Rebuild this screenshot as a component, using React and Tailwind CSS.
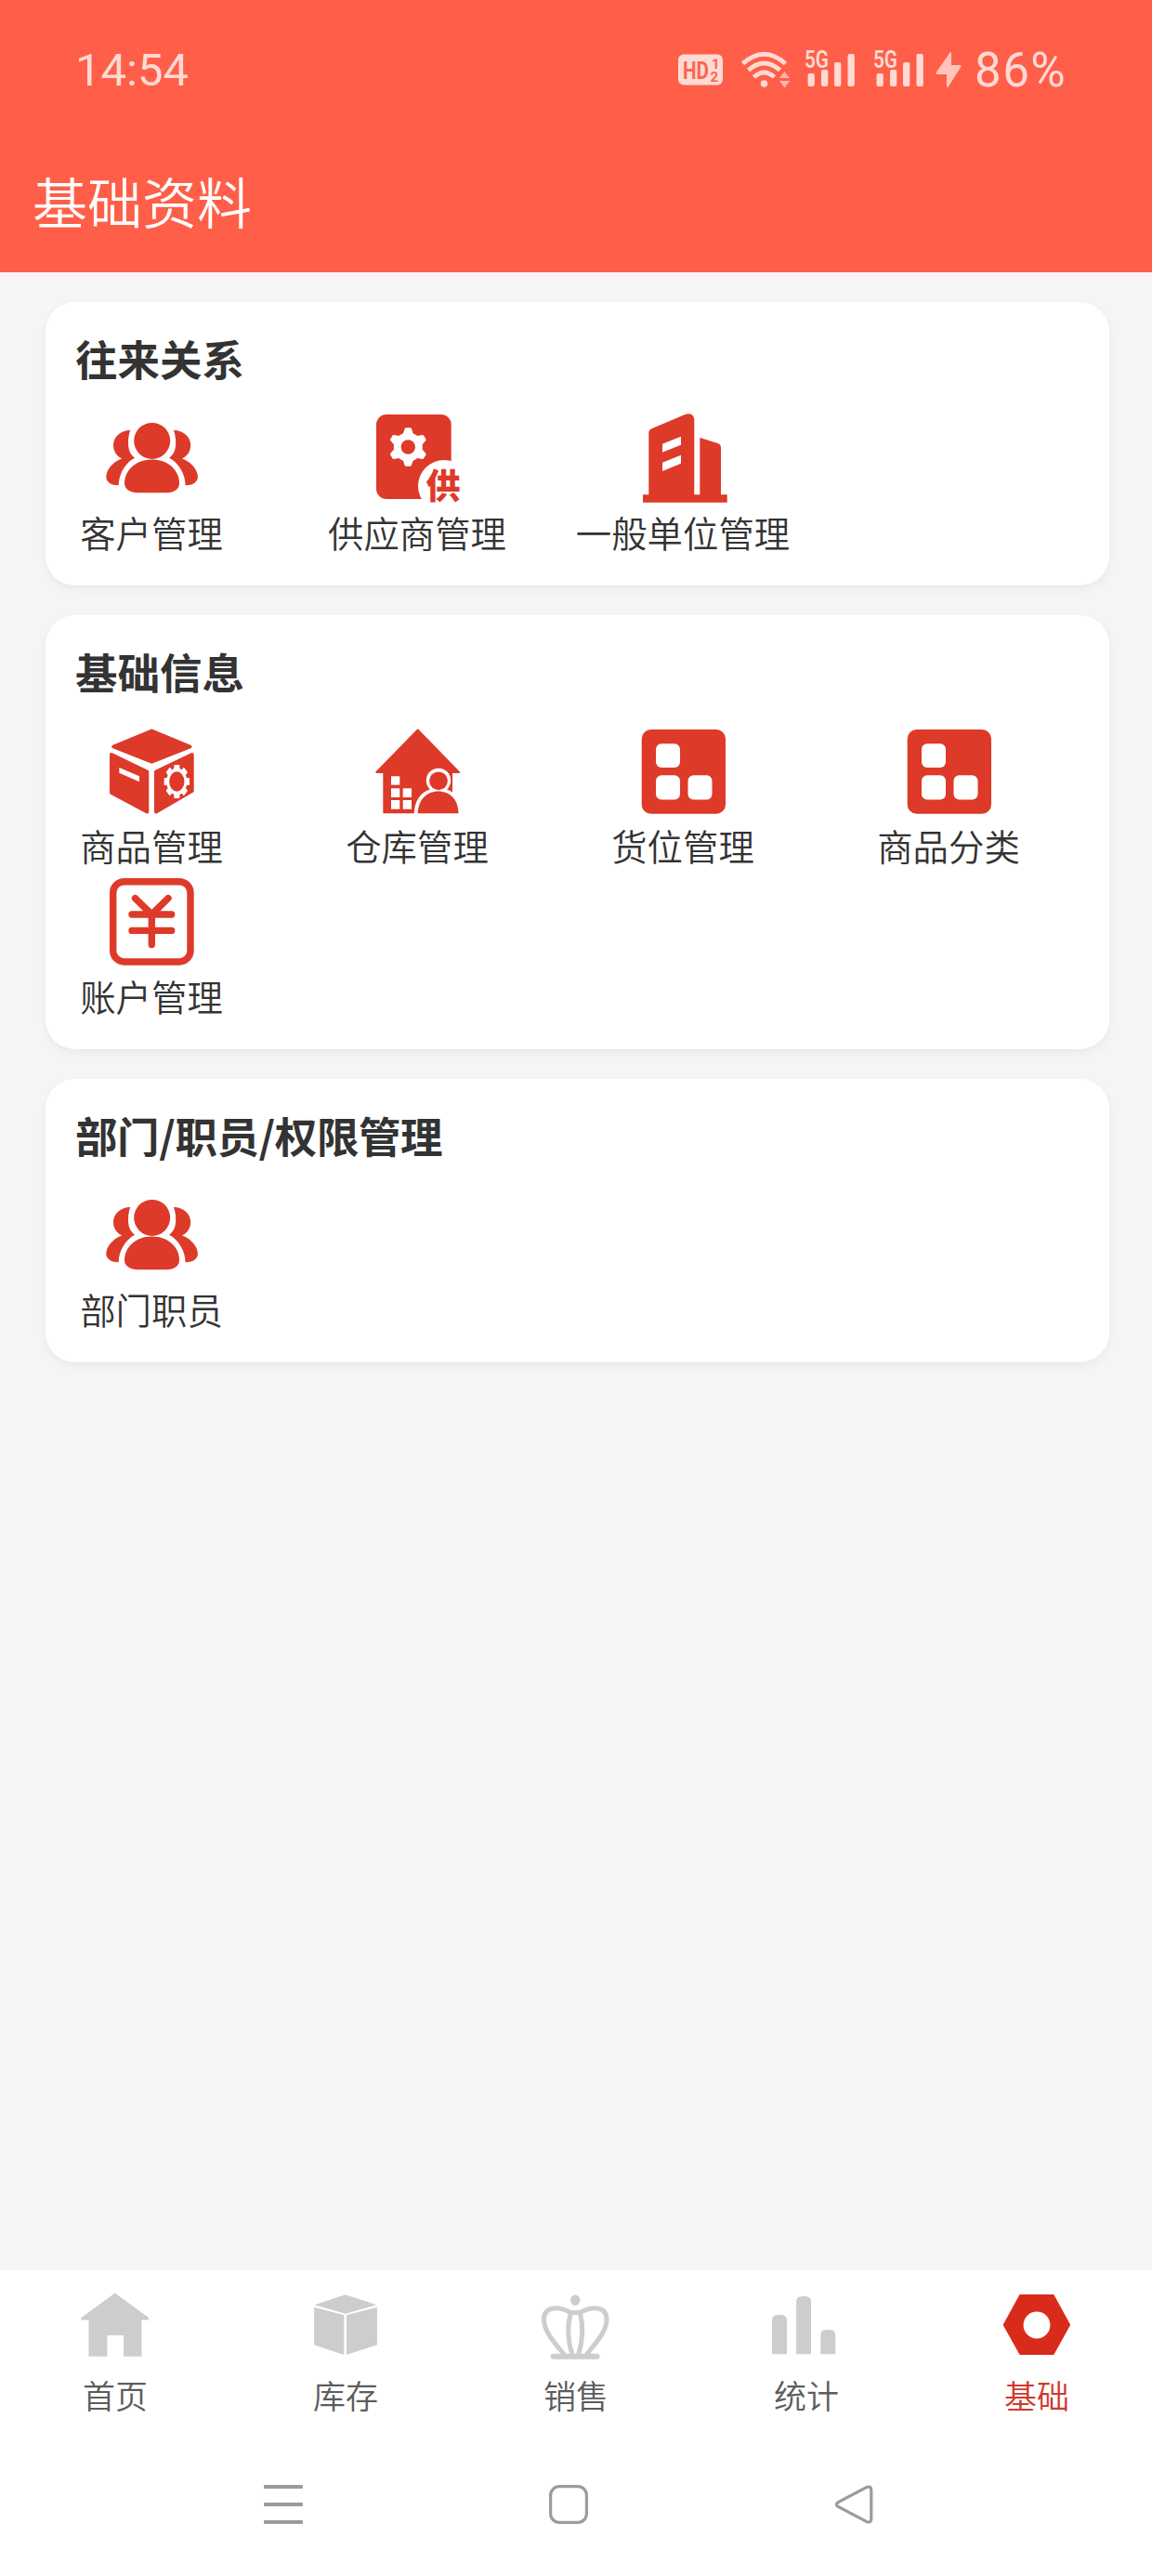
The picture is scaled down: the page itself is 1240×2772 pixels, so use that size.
import React from "react";

const RED = "#dd3a29";
const GRAY = "#cdcdcd";

function Tile({ children }) {
  return (
    <svg viewBox="0 0 96 96" className="block h-24 w-24 overflow-visible" fill={RED}>
      {children}
    </svg>
  );
}

const SIDE =
  "M25.3 18C15 18 7 25 7 34C7 41 11 46 16.3 48.5C6 52 -0.7 61 -0.7 68.3C-0.7 74 5 77.3 12.7 77.3C12.7 65 20 53 30 47.7C24.5 43.5 23 38 23 31C23 26 24 21 25.3 18Z";

function People() {
  return (
    <Tile>
      <circle cx="48.7" cy="29.4" r="19.5" />
      <path d="M48.7 49.5C30 49.5 19 62 19 75C19 81 25 85.3 33 85.3H64.5C72.5 85.3 78 81 78 75C78 62 67 49.5 48.7 49.5Z" />
      <path d={SIDE} />
      <path d={SIDE} transform="translate(97.2 0) scale(-1 1)" />
    </Tile>
  );
}

function Supplier() {
  return (
    <Tile>
      <rect x="4" y="1" width="80.7" height="91" rx="11" />
      <g fill="#fff" stroke="#fff">
        <circle cx="38.3" cy="36" r="15.5" stroke="none" />
        {[0, 60, 120].map((a) => (
          <path
            key={a}
            d="M36 16.5H40.6L44 26V46L40.6 55.5H36L32.6 46V26Z"
            strokeWidth="2.5"
            strokeLinejoin="round"
            transform={`rotate(${a} 38.3 36)`}
          />
        ))}
      </g>
      <circle cx="38.3" cy="36" r="7.7" />
      <circle cx="77" cy="78" r="28" fill="#fff" />
      <text
        x="76"
        y="91.5"
        textAnchor="middle"
        fontSize="37"
        className="font-['Noto_Sans_CJK_SC',sans-serif] font-black"
      >
        供
      </text>
    </Tile>
  );
}

function Building() {
  return (
    <Tile>
      <path
        fillRule="evenodd"
        d="M11.3 87.3V21Q11.3 17.5 14.5 16.2L51 0.8Q60.3 -1.5 60.3 8V87.3H66.3V26L85.5 31.9Q89 33 89 37V87.3H95.7V95.7H5V87.3ZM26 32.7V41.7L46 33.7V24.7ZM26 52.7V62L46 53.7V44.7Z"
      />
    </Tile>
  );
}

function Goods() {
  return (
    <Tile>
      <g stroke={RED} strokeWidth="4" strokeLinejoin="round">
        <path d="M48.3 4.5L89.5 21.5L48.3 37.7L7.2 21.5Z" />
        <path d="M5 30L43.3 48.5V91.5L5 71Z" />
        <path d="M53 48.5L91.7 30V69L53 91.5Z" />
      </g>
      <path d="M13.3 44L35 53.3V59.3L13.3 49.8Z" fill="#fff" />
      <g transform="translate(75.3 59) scale(0.76 1)">
        <circle r="14.5" fill="#fff" />
        {[0, 45, 90, 135].map((a) => (
          <rect key={a} x="-4" y="-18" width="8" height="36" rx="1" fill="#fff" transform={`rotate(${a})`} />
        ))}
        <circle r="10.7" />
      </g>
    </Tile>
  );
}

function Warehouse() {
  return (
    <Tile>
      <path
        d="M48.7 3.5L93 49H85V92.3H12.3V49H4.3Z"
        stroke={RED}
        strokeWidth="2"
        strokeLinejoin="round"
      />
      <g fill="#fff">
        <rect x="20" y="53.3" width="9.3" height="9.3" />
        <rect x="20" y="66.3" width="9.3" height="9.7" />
        <rect x="32.7" y="66.3" width="9.3" height="9.7" />
        <rect x="20" y="79" width="9.3" height="9.7" />
        <rect x="32.7" y="79" width="9.3" height="9.7" />
        <path d="M44.7 94C45 80 52 70 62 67.5A13.2 13.2 0 1 1 80 67.5Q84 68.5 87 71.5V94Z" />
      </g>
      <circle cx="71" cy="58.3" r="9.9" />
      <path d="M48.7 93.3C49 78 59 69.5 70.7 69.5C83 69.5 92.3 78 92.5 93.3Z" />
    </Tile>
  );
}

function Blocks() {
  return (
    <Tile>
      <rect x="3.7" y="3" width="90.3" height="90.7" rx="10" />
      <g fill="#fff">
        <rect x="19" y="18.3" width="26" height="25.7" rx="6" />
        <rect x="19" y="52.3" width="26" height="26.3" rx="6" />
        <rect x="53.5" y="52.3" width="26" height="26.3" rx="6" />
      </g>
    </Tile>
  );
}

function Account() {
  return (
    <Tile>
      <g fill="none" stroke={RED} strokeWidth="7.4" strokeLinecap="round">
        <rect x="6.7" y="4.7" width="83.3" height="86.3" rx="12" />
        <path d="M30.5 22.7L48.3 40L66 22.7M27 40H69.7M27 57.4H69.7M48.3 40V72.5" />
      </g>
    </Tile>
  );
}

const sections = [
  {
    title: "往来关系",
    items: [
      ["客户管理", People],
      ["供应商管理", Supplier],
      ["一般单位管理", Building],
    ],
  },
  {
    title: "基础信息",
    items: [
      ["商品管理", Goods],
      ["仓库管理", Warehouse],
      ["货位管理", Blocks],
      ["商品分类", Blocks],
      ["账户管理", Account],
    ],
  },
  { title: "部门/职员/权限管理", tight: true, items: [["部门职员", People]] },
];

const tabs = [
  [
    "首页",
    <path d="M36.8 2.5L73 29Q74 31.5 71.5 31.5H65.5V70.7H46V48H28.4V70.7H8.5V31.5H2Q-0.8 31.5 0.5 29Z" />,
  ],
  [
    "库存",
    <path d="M36.8 4.3L70.5 15.3L36.8 24.7L3.5 15.3ZM3.1 17.7L35.3 26.3V69L3.1 58.3ZM38 26.3L70.9 17.7V58.3L38 69Z" />,
  ],
  [
    "销售",
    <g>
      <ellipse cx="36.2" cy="10.3" rx="5.2" ry="5.7" />
      <g fill="none" stroke={GRAY} strokeWidth="5">
        <path d="M24.5 69C14 56 2.5 44 2.5 31C2.5 17 17 16 31 23.5H41.5C55.5 16 70 17 70 31C70 44 58.5 56 48 69" />
        <path d="M31.2 24C27.5 38 28.5 55 33 69M41.3 24C45 38 44 55 39.5 69" />
        <path d="M12.7 70.7H59.5" strokeWidth="6" strokeLinecap="round" />
      </g>
    </g>,
  ],
  [
    "统计",
    <path d="M0 68.3V32Q0 26 6 26H10Q16 26 16 32V68.3ZM26.1 68.3V12Q26.1 6 32 6H36Q42 6 42 12V68.3ZM52.3 68.3V48Q52.3 42 58 42H62Q68.2 42 68.2 48V68.3Z" />,
  ],
  [
    "基础",
    <path
      fill="#d92b1a"
      fillRule="evenodd"
      d="M0.6 36.7L18.6 4H55.3L73.2 36.7L55.3 69H18.6ZM37 22.6A14.4 14.4 0 1 0 37 51.4A14.4 14.4 0 1 0 37 22.6Z"
    />,
  ],
];

function Signal() {
  return (
    <svg viewBox="0 0 54 40" className="block h-10 w-[54px] overflow-visible" fill="#ffdad4">
      <text x="0" y="18" fontSize="25" textLength="26" lengthAdjust="spacingAndGlyphs" className="font-['Roboto',sans-serif] font-semibold">
        5G
      </text>
      <rect x="3.5" y="24" width="7.3" height="14" rx="2" />
      <rect x="18" y="20" width="7.3" height="18" rx="2" />
      <rect x="32" y="12" width="7.3" height="26" rx="2" />
      <rect x="46.5" y="3" width="7.3" height="35" rx="2" />
    </svg>
  );
}

function StatusBar() {
  return (
    <div className="flex h-[150px] items-center pr-[91px] pl-[81px] text-[#ffdad4]">
      <span className="font-['Roboto',sans-serif] text-[49px] leading-none">14:54</span>
      <div className="ml-auto flex items-center">
        <svg viewBox="0 0 48 34" className="mr-[20px] block h-[34px] w-12">
          <rect y="0.5" width="48" height="33" rx="6" fill="#ffdad4" />
          <g fill="#f9654f" className="font-['Roboto',sans-serif] font-bold">
            <text x="5" y="26.5" fontSize="26" textLength="28" lengthAdjust="spacingAndGlyphs">HD</text>
            <text x="36" y="15.5" fontSize="15">1</text>
            <text x="34.5" y="29.5" fontSize="15">2</text>
          </g>
        </svg>
        <svg viewBox="0 0 52 40" className="mr-[16px] block h-10 w-[52px]">
          <g fill="none" stroke="#ffdad4" strokeWidth="5">
            <path d="M1.500 13.500Q24.500 -7 47.500 13.500" />
            <path d="M7.500 20.500Q24.500 5.500 41.500 20.500" />
            <path d="M13.500 28Q24.500 18 35.500 28" />
          </g>
          <circle cx="24.5" cy="35" r="3.8" fill="#ffdad4" />
          <path d="M46.500 22L52 29H41ZM41 32H52L46.500 39.500Z" fill="#ffb7aa" />
        </svg>
        <Signal />
        <div className="w-5" />
        <Signal />
        <svg viewBox="0 0 28 38" className="mr-[14px] ml-[13px] block h-[38px] w-7" fill="#ffc5bb">
          <path d="M15.500 0.500Q17 -0.500 17 1.500V14H26Q28.500 14 27 16.500L14 37Q12 39 12 36.500V24H2Q-0.500 24 1 21.500Z" />
        </svg>
        <span className="w-[100px] font-['Roboto',sans-serif] text-[51px] leading-none tracking-[1.5px] whitespace-nowrap">86%</span>
      </div>
    </div>
  );
}

export default function App() {
  return (
    <div className="flex h-[2772px] w-[1240px] flex-col overflow-hidden bg-[#f5f5f5] font-['Noto_Sans_CJK_SC',sans-serif] text-[#333]">
      <header className="h-[293px] bg-[#ff5f49]">
        <StatusBar />
        <h1 className="pl-[35px] text-[59px] leading-[131px] font-[350] text-white">基础资料</h1>
      </header>

      <main className="flex flex-1 flex-col gap-8 pt-8 pr-[46px] pl-[49px]">
        {sections.map((s) => (
          <section key={s.title} className="rounded-[32px] bg-white pb-6 shadow-[0_4px_10px_rgba(0,0,0,0.05)]">
            <h2
              className={
                s.tight
                  ? "mb-[25px] pt-[26px] pl-8 text-[45.5px] leading-[68px] font-bold tracking-[-0.4px]"
                  : "mb-[25px] pt-[26px] pl-8 text-[45.5px] leading-[68px] font-bold"
              }
            >
              {s.title}
            </h2>
            <div className="grid grid-cols-[repeat(4,228px)] gap-x-[58px]">
              {s.items.map(([label, Icon]) => (
                <div key={label} className="flex flex-col items-center pt-px pb-[2px]">
                  <Icon />
                  <span className="text-[38.4px] leading-[63px] font-[350] whitespace-nowrap">{label}</span>
                </div>
              ))}
            </div>
          </section>
        ))}
      </main>

      <nav className="grid h-[175px] grid-cols-5 bg-white pt-[22px]">
        {tabs.map(([label, art], i) => (
          <div key={label} className="flex flex-col items-center">
            <svg viewBox="0 0 74 74" className="block h-[74px] w-[74px] overflow-visible" fill={GRAY}>
              {art}
            </svg>
            <span
              className={
                i === 4
                  ? "mt-[8px] text-[35px] leading-[60px] font-[350] text-[#d0382c]"
                  : "mt-[8px] text-[35px] leading-[60px] font-[350] text-[#5c5c5c]"
              }
            >
              {label}
            </span>
          </div>
        ))}
      </nav>

      <footer className="flex h-[154px] items-center justify-center gap-[265px] bg-white pr-[17px]">
        <svg viewBox="0 0 42 42" className="h-[42px] w-[42px]" fill="#9b9b9b">
          <rect y="0" width="42" height="4" rx="1" />
          <rect y="19" width="42" height="4" rx="1" />
          <rect y="38" width="42" height="4" rx="1" />
        </svg>
        <svg viewBox="0 0 42 42" className="h-[42px] w-[42px]" fill="none" stroke="#9b9b9b" strokeWidth="3.2">
          <rect x="1.6" y="1.6" width="38.8" height="38.8" rx="9.5" />
        </svg>
        <svg viewBox="0 0 42 42" className="h-[42px] w-[42px]" fill="none" stroke="#9b9b9b" strokeWidth="3.2">
          <path d="M34.500 2.600L3.800 18.800Q1 21 3.800 23.200L34.500 39.400Q39.800 41.500 39.800 36.500V5.500Q39.800 0.500 34.500 2.600Z" />
        </svg>
      </footer>
    </div>
  );
}
